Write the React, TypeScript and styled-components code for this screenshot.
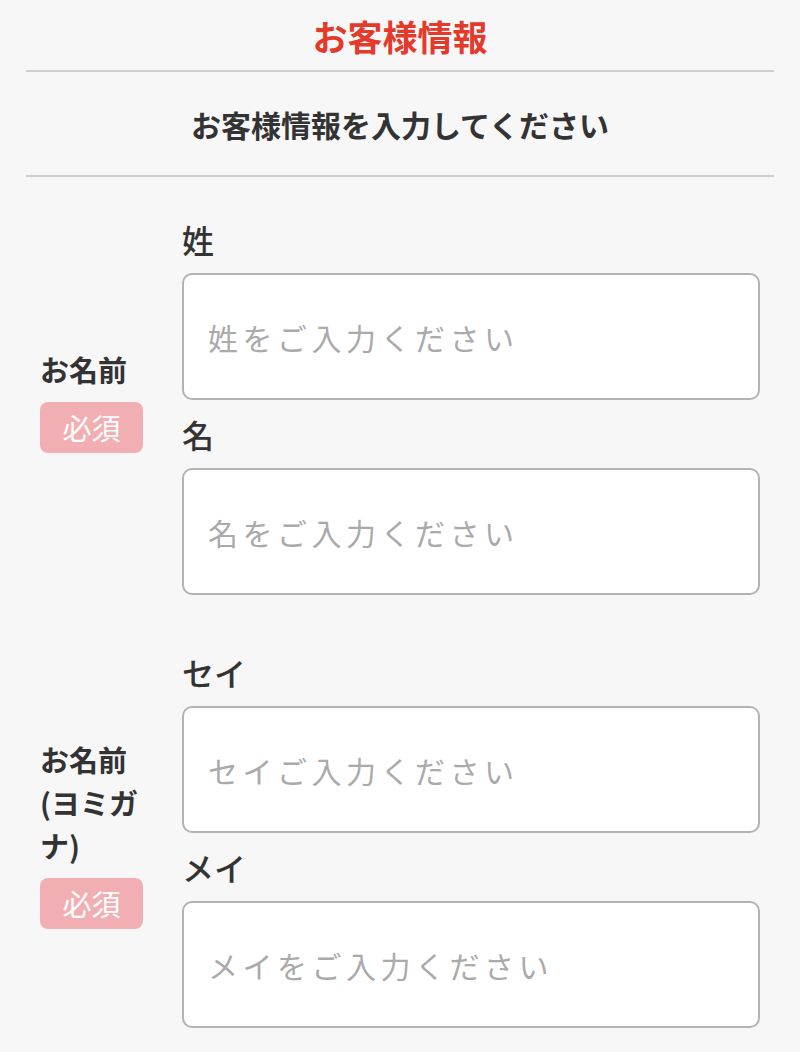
import React from "react";
import styled, { createGlobalStyle } from "styled-components";

const GlobalStyle = createGlobalStyle`
  html, body {
    margin: 0;
    padding: 0;
    background: #f7f7f7;
  }
  body {
    font-family: "Noto Sans CJK JP", "Noto Sans", sans-serif;
    color: #333333;
  }
`;

const Page = styled.div`
  width: 800px;
  min-height: 1052px;
  background: #f7f7f7;
`;

const Title = styled.h1`
  margin: 0;
  height: 70px;
  display: flex;
  align-items: center;
  justify-content: center;
  font-size: 35px;
  font-weight: 700;
  color: #e43a2b;
`;

const Divider = styled.hr`
  margin: 0 26px;
  border: none;
  height: 2px;
  background: #cfcfcf;
`;

const Lead = styled.p`
  margin: 0;
  height: 103px;
  display: flex;
  align-items: center;
  justify-content: center;
  font-size: 30px;
  font-weight: 700;
  color: #333333;
`;

const Form = styled.div`
  display: flex;
  flex-direction: column;
  gap: 43px;
  padding: 28px 40px 0 40px;
`;

const Group = styled.div`
  display: flex;
  align-items: center;
  gap: 39px;
`;

const Side = styled.div`
  width: 103px;
  flex-shrink: 0;
  display: flex;
  flex-direction: column;
  align-items: flex-start;
`;

const SideLabel = styled.div`
  font-size: 29px;
  font-weight: 700;
  line-height: 43px;
  color: #333333;
`;

const Badge = styled.span`
  margin-top: 11px;
  width: 103px;
  height: 51px;
  border-radius: 8px;
  background: #f2afb3;
  color: #ffffff;
  font-size: 29px;
  display: flex;
  align-items: center;
  justify-content: center;
`;

const Fields = styled.div`
  flex: 1;
  display: flex;
  flex-direction: column;
`;

const FieldLabel = styled.label`
  height: 68px;
  display: flex;
  align-items: center;
  font-size: 32px;
  font-weight: 500;
  color: #333333;
`;

const Input = styled.input`
  box-sizing: border-box;
  width: 100%;
  height: 127px;
  border: 2px solid #b3b3b3;
  border-radius: 10px;
  background: #ffffff;
  padding: 0 0 0 24px;
  font-family: "Noto Sans CJK JP", "Noto Sans", sans-serif;
  font-size: 30px;
  letter-spacing: 4.5px;
  color: #333333;
  outline: none;

  &::placeholder {
    color: #aaaaaa;
  }
`;

type Field = { label: string; placeholder: string };

type Section = { title: string; fields: Field[] };

const sections: Section[] = [
  {
    title: "お名前",
    fields: [
      { label: "姓", placeholder: "姓をご入力ください" },
      { label: "名", placeholder: "名をご入力ください" },
    ],
  },
  {
    title: "お名前(ヨミガナ)",
    fields: [
      { label: "セイ", placeholder: "セイご入力ください" },
      { label: "メイ", placeholder: "メイをご入力ください" },
    ],
  },
];

const App: React.FC = () => {
  return (
    <>
      <GlobalStyle />
      <Page>
        <Title>お客様情報</Title>
        <Divider />
        <Lead>お客様情報を入力してください</Lead>
        <Divider />
        <Form>
          {sections.map((s) => (
            <Group key={s.title}>
              <Side>
                <SideLabel>{s.title}</SideLabel>
                <Badge>必須</Badge>
              </Side>
              <Fields>
                {s.fields.map((f) => (
                  <React.Fragment key={f.label}>
                    <FieldLabel>{f.label}</FieldLabel>
                    <Input placeholder={f.placeholder} />
                  </React.Fragment>
                ))}
              </Fields>
            </Group>
          ))}
        </Form>
      </Page>
    </>
  );
};

export default App;
